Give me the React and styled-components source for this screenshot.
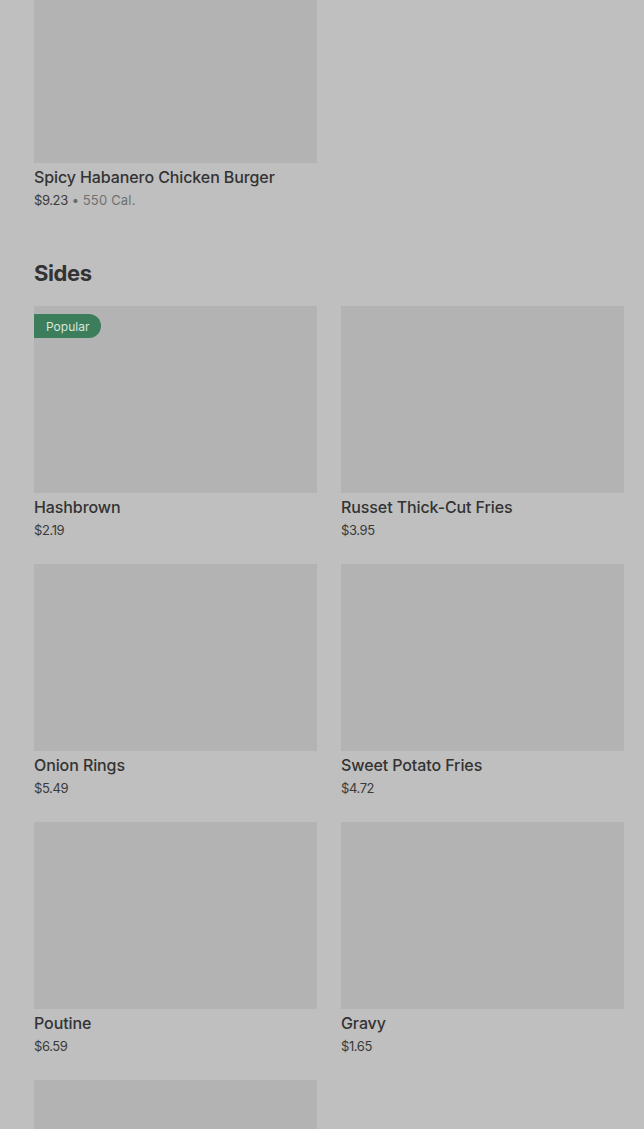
import React from "react";
import styled, { createGlobalStyle } from "styled-components";

const GlobalStyle = createGlobalStyle`
  html, body {
    margin: 0;
    padding: 0;
    background: #bfbfbf;
    font-family: Inter, "Noto Sans", "Liberation Sans", sans-serif;
    color: #333333;
  }
`;

const burgers = [
  { name: "Spicy Habanero Chicken Burger", price: "$9.23", cal: "550 Cal." },
];

const sides = [
  { name: "Hashbrown", price: "$2.19", popular: true },
  { name: "Russet Thick-Cut Fries", price: "$3.95" },
  { name: "Onion Rings", price: "$5.49" },
  { name: "Sweet Potato Fries", price: "$4.72" },
  { name: "Poutine", price: "$6.59" },
  { name: "Gravy", price: "$1.65" },
  { name: "", price: "" },
];

function Item({ item }) {
  return (
    <Card>
      <Photo>{item.popular && <Badge>Popular</Badge>}</Photo>
      {item.name && (
        <Info>
          <Name>{item.name}</Name>
          <Meta>
            {item.price}
            {item.cal && (
              <>
                <Dot>•</Dot>
                <Cal>{item.cal}</Cal>
              </>
            )}
          </Meta>
        </Info>
      )}
    </Card>
  );
}

export default function App() {
  return (
    <>
      <GlobalStyle />
      <Page>
        <Section>
          <Grid>
            {burgers.map((b) => (
              <Item key={b.name} item={b} />
            ))}
          </Grid>
        </Section>
        <Section>
          <Heading>Sides</Heading>
          <Grid>
            {sides.map((s, i) => (
              <Item key={i} item={s} />
            ))}
          </Grid>
        </Section>
      </Page>
    </>
  );
}

const Page = styled.div`
  margin-top: -24px;
  padding: 0 20px 0 34px;
  display: flex;
  flex-direction: column;
  gap: 47px;
`;

const Section = styled.section`
  display: flex;
  flex-direction: column;
  gap: 17px;
`;

const Heading = styled.h2`
  margin: 0;
  font-size: 22px;
  line-height: 32px;
  font-weight: 700;
  letter-spacing: -0.4px;
  color: #333333;
`;

const Grid = styled.div`
  display: grid;
  grid-template-columns: 283px 283px;
  column-gap: 24px;
  row-gap: 24px;
`;

const Card = styled.div`
  display: flex;
  flex-direction: column;
`;

const Photo = styled.div`
  position: relative;
  height: 187px;
  background: #b3b3b3;
`;

const Badge = styled.span`
  position: absolute;
  top: 8px;
  left: 0;
  height: 24px;
  padding: 0 12px;
  display: flex;
  align-items: center;
  background: #3c7d5b;
  color: #d9e8df;
  font-size: 12px;
  border-radius: 0 12px 12px 0;
`;

const Info = styled.div`
  padding-top: 3px;
  display: flex;
  flex-direction: column;
  gap: 2px;
`;

const Name = styled.div`
  font-size: 16px;
  line-height: 22px;
  font-weight: 500;
  letter-spacing: -0.1px;
  color: #333333;
`;

const Meta = styled.div`
  font-size: 13px;
  line-height: 20px;
  color: #3a3a3a;
  letter-spacing: -0.4px;
`;

const Dot = styled.span`
  margin: 0 4px;
  color: #6a6a6a;
`;

const Cal = styled.span`
  color: #707070;
  letter-spacing: 0.2px;
`;
